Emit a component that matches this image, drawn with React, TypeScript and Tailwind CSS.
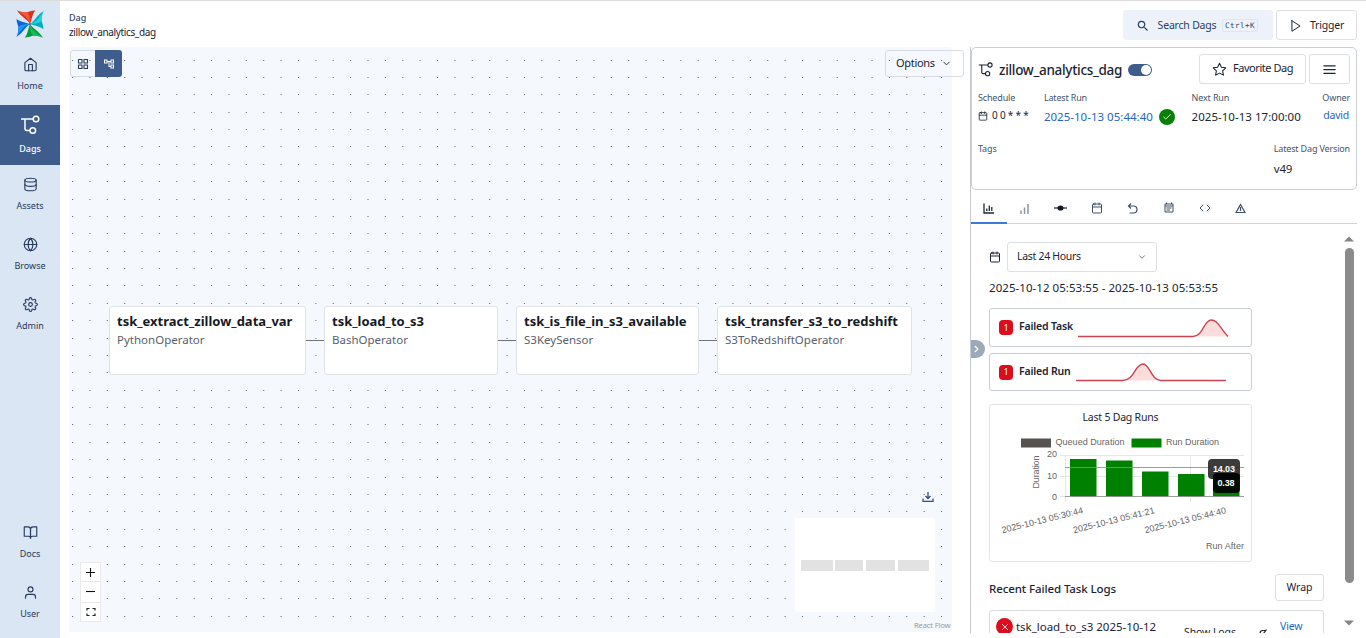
import type { ReactNode } from "react";
import {
  FiBookOpen, FiCalendar, FiCheck, FiChevronDown, FiChevronRight, FiCode, FiDatabase, FiGlobe,
  FiGrid, FiHome, FiMenu, FiPlay, FiSettings, FiStar, FiUser, FiX,
} from "react-icons/fi";
import { MdOutlineAccountTree, MdOutlineEventNote, MdSearch } from "react-icons/md";

const blades = [
  { angle: 0, dark: "#d9331f", light: "#f4593c" },
  { angle: 90, dark: "#00aebd", light: "#22d3dd" },
  { angle: 180, dark: "#009b3f", light: "#1cb95a" },
  { angle: 270, dark: "#0a66d8", light: "#1c97f5" },
];

function Logo() {
  return (
    <svg width="28" height="28" viewBox="-42 -42 84 84">
      {blades.map((b) => (
        <g key={b.angle} transform={`rotate(${b.angle})`}>
          <path d="M0 0C-6 -12 -26 -20 -39 -41C-28 -34 -18 -36 -8 -35C2 -38 10 -41 16 -40C8 -34 6 -16 0 0Z" fill={b.dark} />
          <path d="M0 0C-4 -16 -18 -28 -39 -41C-28 -34 -18 -36 -8 -35C-2 -26 1 -12 0 0Z" fill={b.light} />
        </g>
      ))}
      <circle r="2.500" fill="#2b3547" />
    </svg>
  );
}

function DagIcon({ size, stroke = 1.6 }: { size: number; stroke?: number }) {
  return (
    <svg width={size} height={size} viewBox="0 0 20 20" fill="none" stroke="currentColor" strokeWidth={stroke}>
      <path d="M1 4h12M5 4v9.500q0 2 2 2h3" />
      <circle cx="16" cy="4" r="2.800" />
      <circle cx="12.800" cy="15.500" r="2.800" />
    </svg>
  );
}

function NavItem({ icon, label, active }: { icon: ReactNode; label: string; active?: boolean }) {
  return (
    <div className={active ? "flex h-[60px] w-[60px] flex-col items-center bg-[#3f5d8c] pt-[9px] text-white" : "flex h-[60px] w-[60px] flex-col items-center pt-[8px] text-[#263a5c]"}>
      <div className="flex h-[22px] items-center">{icon}</div>
      <span className={active ? "mt-[6px] text-[9px] leading-[14px] font-medium" : "mt-[4px] text-[9px] leading-[14px]"}>{label}</span>
    </div>
  );
}

function Sidebar() {
  return (
    <nav className="flex h-full w-[60px] shrink-0 flex-col bg-[#dae6f4]">
      <div className="flex h-[44px] items-center justify-center pt-[1px]"><Logo /></div>
      <NavItem icon={<FiHome size={15} strokeWidth={1.8} />} label="Home" />
      <NavItem icon={<DagIcon size={20} stroke={1.5} />} label="Dags" active />
      <NavItem icon={<FiDatabase size={15} strokeWidth={1.8} />} label="Assets" />
      <NavItem icon={<FiGlobe size={15} strokeWidth={1.8} />} label="Browse" />
      <NavItem icon={<FiSettings size={15} strokeWidth={1.8} />} label="Admin" />
      <div className="mt-auto mb-[5px]">
        <NavItem icon={<FiBookOpen size={15} strokeWidth={1.8} />} label="Docs" />
        <NavItem icon={<FiUser size={15} strokeWidth={1.8} />} label="User" />
      </div>
    </nav>
  );
}

function Header() {
  return (
    <header className="flex h-[46px] shrink-0 items-start justify-between pr-[9px] pl-[9px]">
      <div className="flex flex-col pt-[10px]">
        <span className="text-[9px] leading-[14px] font-medium text-[#2f4569]">Dag</span>
        <span className="text-[10px] leading-[15px] tracking-[-0.35px]">zillow_analytics_dag</span>
      </div>
      <div className="flex gap-[3px] pt-[9px]">
        <button className="flex h-[30px] w-[150px] items-center rounded-[3px] bg-[#edf2fa] pt-[1px] pl-[13px] text-[#2b3f62]">
          <MdSearch size={14} />
          <span className="ml-[7px] w-[60px] text-[10.5px] tracking-[-0.2px] whitespace-nowrap">Search Dags</span>
          <span className="ml-[5px] flex h-[13px] w-[36px] items-center justify-center rounded-[2px] border border-[#dfe6f0] font-['DejaVu_Sans_Mono',monospace] text-[7.500px] tracking-[0.5px]">Ctrl+K</span>
        </button>
        <button className="flex h-[30px] w-[81px] items-center rounded-[3px] border border-[#dcdfe4] pt-[1px] pl-[12px]">
          <FiPlay size={14} strokeWidth={1.7} />
          <span className="ml-[7px] text-[10.5px] tracking-[-0.2px]">Trigger</span>
        </button>
      </div>
    </header>
  );
}

const nodes = [
  { id: "tsk_extract_zillow_data_var", op: "PythonOperator", box: "left-[40px] w-[197px]" },
  { id: "tsk_load_to_s3", op: "BashOperator", box: "left-[255px] w-[174px]" },
  { id: "tsk_is_file_in_s3_available", op: "S3KeySensor", box: "left-[447px] w-[183px]" },
  { id: "tsk_transfer_s3_to_redshift", op: "S3ToRedshiftOperator", box: "left-[648px] w-[195px]" },
];

const DOT_GAP = 17.38;
const dotRows = Array.from({ length: 33 }, (_, i) => Math.floor(13 + i * DOT_GAP) + 0.5);

function Graph() {
  return (
    <section className="relative h-[585px] w-[883px] rounded-[3px] bg-[#f5f8fc]">
      <svg className="absolute inset-0" width="883" height="575">
        {dotRows.map((y) => (
          <path key={y} d={`M3 ${y}H880`} stroke="#6a717c" strokeWidth="1" strokeDasharray="1.1 16.28" />
        ))}
        <path d="M237 293.500h18M429 293.500h18M630 293.500h18" stroke="#6b7280" />
      </svg>
      {nodes.map((n) => (
        <div key={n.id} className={`absolute top-[259px] h-[69px] rounded-[3px] border border-[#dfe2e6] bg-white pt-[6px] pl-[7px] whitespace-nowrap ${n.box}`}>
          <div className="text-[13px] leading-[17px] font-bold text-[#16191f]">{n.id}</div>
          <div className="mt-[1px] text-[11.5px] leading-[17px] text-[#57616d]">{n.op}</div>
        </div>
      ))}
      <div className="absolute top-[3px] left-[1px] flex h-[27px] w-[52px] overflow-hidden rounded-[3px]">
        <span className="flex w-[25px] items-center justify-center rounded-l-[3px] border border-r-0 border-[#d5dce6] text-[#263a5c]"><FiGrid size={12} strokeWidth={2.2} /></span>
        <span className="flex w-[27px] items-center justify-center bg-[#3f5d8c] text-white"><MdOutlineAccountTree size={12} /></span>
      </div>
      <button className="absolute top-[3px] left-[816px] flex h-[27px] w-[79px] items-center rounded-[3px] border border-[#d9dde3] pl-[10px] text-[11px]">
        <span className="w-[38px] tracking-[-0.3px]">Options</span>
        <FiChevronDown className="ml-[7px]" size={11} />
      </button>
      <div className="absolute top-[515px] left-[11px] flex h-[60px] w-[21px] flex-col divide-y divide-[#e8eaed] border border-[#e8eaed] bg-white">
        <span className="flex flex-1 items-center justify-center"><svg width="9" height="9"><path d="M4.500 0v9M0 4.500h9" stroke="#111" strokeWidth="1.1" /></svg></span>
        <span className="flex flex-1 items-center justify-center pb-[1px]"><svg width="9" height="9"><path d="M0 4.500h9" stroke="#111" strokeWidth="1.1" /></svg></span>
        <span className="flex flex-1 items-center justify-center"><svg width="10" height="10" fill="none" stroke="#222" strokeWidth="1.2"><path d="M1 3.500V1.500H3.500M6.500 1.500H9V3.500M9 6.500V8.500H6.500M3.500 8.500H1V6.500" /></svg></span>
      </div>
      <svg className="absolute top-[444px] left-[853px]" width="12" height="12" fill="none" stroke="#334e86" strokeWidth="1.3">
        <path d="M6 1v6.500M3.500 5L6 7.500L8.500 5M1 7.500V10.300H11V7.500" />
      </svg>
      <svg className="absolute top-[471px] left-[726px] bg-white" width="140" height="94" fill="#e2e2e2">
        <path d="M6 42h32v11H6zM40 42h28v11H40zM71 42h29v11H71zM103 42h31v11H103z" />
      </svg>
      <span className="absolute top-[572px] left-[845px] text-[7.500px] leading-[12px] tracking-[-0.1px] whitespace-nowrap text-[#999]">React Flow</span>
    </section>
  );
}

function Label({ children }: { children: ReactNode }) {
  return <div className="text-[9px] leading-[14px] tracking-[-0.16px] whitespace-nowrap text-[#44546c]">{children}</div>;
}

function DagCard() {
  return (
    <div className="h-[143px] shrink-0 rounded-[5px] border border-[#cbcfd4] pt-[6px] pr-[6px] pl-[6px]">
      <div className="flex h-[30px] items-center">
        <DagIcon size={15} stroke={1.5} />
        <h1 className="ml-[6px] w-[122px] pt-[1px] text-[13.5px] leading-[20px] font-medium tracking-[-0.3px] whitespace-nowrap">zillow_analytics_dag</h1>
        <span className="mt-[2px] ml-[7px] flex h-[12px] w-[24px] items-center justify-end rounded-full bg-[#3f5d8c] p-[1px]"><span className="h-[10px] w-[10px] rounded-full bg-white" /></span>
        <button className="ml-auto flex h-[30px] w-[107px] items-center rounded-[3px] border border-[#dcdfe4] pl-[12px] text-[11px]">
          <FiStar size={15} strokeWidth={1.7} /><span className="ml-[6px] -mt-[1px] tracking-[-0.45px] whitespace-nowrap">Favorite Dag</span>
        </button>
        <button className="ml-[3px] flex h-[30px] w-[41px] items-center justify-center rounded-[3px] border border-[#dcdfe4]"><FiMenu size={15} /></button>
      </div>
      <div className="mt-[7px] flex">
        <div className="w-[66px]">
          <Label>Schedule</Label>
          <div className="mt-[3px] flex items-center gap-[4px] leading-[15px]"><FiCalendar size={10} /><span className="text-[10px] tracking-[-0.2px] whitespace-nowrap">0 0 * * *</span></div>
        </div>
        <div className="w-[148px]">
          <Label>Latest Run</Label>
          <div className="mt-[3px] flex items-center text-[11.5px] leading-[18px] text-[#2565c7]">
            <span className="w-[109px] tracking-[0.02px] whitespace-nowrap">2025-10-13 05:44:40</span>
            <span className="ml-[6px] flex h-[16px] w-[16px] items-center justify-center rounded-full bg-[#078007] text-white"><FiCheck size={10} /></span>
          </div>
        </div>
        <div className="w-[131px]">
          <Label>Next Run</Label>
          <div className="mt-[3px] text-[11.5px] leading-[18px] tracking-[0.03px] whitespace-nowrap">2025-10-13 17:00:00</div>
        </div>
        <div>
          <Label>Owner</Label>
          <div className="mt-[2px] pl-[1px] text-[10.5px] leading-[16px] tracking-[-0.25px] text-[#2565c7]">david</div>
        </div>
      </div>
      <div className="mt-[16px] flex">
        <div className="w-[296px]"><Label>Tags</Label></div>
        <div><Label>Latest Dag Version</Label><div className="mt-[5px] text-[11.5px] leading-[16px] tracking-[-0.2px]">v49</div></div>
      </div>
    </div>
  );
}

const tabs: ReactNode[] = [
  <svg key="a" width="11" height="11" fill="none" stroke="currentColor" strokeWidth="1.3"><path d="M1 0.500V10H11M3.800 5.500V8M6.300 2.500V8M8.800 4V8" /></svg>,
  <svg key="b" width="11" height="11" fill="none" stroke="#8b95a1" strokeWidth="1.500"><path d="M2 7.500V11M5.500 4.500V11M9 1V11" /></svg>,
  <svg key="c" width="13" height="8"><path d="M0 4H13" stroke="#20242b" strokeWidth="1.200" /><ellipse cx="6.500" cy="4" rx="3" ry="2.600" fill="#111827" /></svg>,
  <FiCalendar key="d" size={12} />,
  <svg key="e" width="11" height="11" fill="none" stroke="currentColor" strokeWidth="1.200"><path d="M4 0.500L1.500 3L4 5.500M1.500 3H6.500A3.500 3.500 0 0 1 6.500 10H2.500" /></svg>,
  <MdOutlineEventNote key="f" size={12} />,
  <FiCode key="g" size={12} />,
  <svg key="h" width="11" height="11" fill="none" stroke="currentColor" strokeWidth="1.200"><path d="M5.500 1.500L10 9.500H1ZM5.500 4V8" /></svg>,
];

function Tabs() {
  return (
    <div className="flex h-[34px] shrink-0 border-b border-[#d0d4d9] text-[#3f4f66]">
      {tabs.map((t, i) => (
        <span key={i} className={i === 0 ? "-mb-[1px] flex w-[36px] items-center justify-center border-b-2 border-[#3b7bd8] pt-[5px] pr-[1px] text-[#1c2737]" : "flex w-[36px] items-center justify-center pt-[3px] pr-[1px]"}>{t}</span>
      ))}
    </div>
  );
}

function Trend({ label, fill, line, box }: { label: string; fill: string; line: string; box: string }) {
  return (
    <div className={`flex w-[263px] items-center rounded-[3px] border border-[#c9ced6] pl-[9px] ${box}`}>
      <span className="flex h-[15px] w-[14px] items-center justify-center rounded-[4px] bg-[#dc0d1c] text-[9px] text-white">1</span>
      <span className={label === "Failed Run" ? "ml-[6px] w-[57px] text-[10.5px] font-semibold tracking-[-0.17px] whitespace-nowrap" : "-mt-[2px] ml-[6px] w-[59px] text-[10.5px] font-semibold tracking-[-0.17px] whitespace-nowrap"}>{label}</span>
      <svg width="151" height="24" viewBox="0 -0.500 151 24" fill="none">
        <path d={fill} fill="#fddcdc" />
        <path d={line} stroke="#c94450" strokeWidth="1.400" />
      </svg>
    </div>
  );
}

function RunsChart() {
  const bars = [
    { x: 80, y: 55 }, { x: 116, y: 56.5 }, { x: 152, y: 67.5 }, { x: 188, y: 70 }, { x: 223, y: 71 },
  ];
  const dates = [
    { x: 93.500, y: 109, t: "2025-10-13 05:30:44" }, { x: 165, y: 109, t: "2025-10-13 05:41:21" }, { x: 236.500, y: 109, t: "2025-10-13 05:44:40" },
  ];
  return (
    <div className="mt-[13px] h-[158px] w-[263px] shrink-0 rounded-[3px] border border-[#e2e4e8]">
      <svg width="261" height="156" viewBox="0 1 261 156" fontFamily="'Liberation Sans', Arial, sans-serif" fontSize="9" fill="#666">
        <text x="92.500" y="16.500" fontFamily="'Noto Sans', sans-serif" fontSize="10.5" fill="#1b2433" textLength="76">Last 5 Dag Runs</text>
        <rect x="31" y="34.5" width="30" height="9" fill="#555250" />
        <text x="65.500" y="41" textLength="69">Queued Duration</text>
        <rect x="141.500" y="34.5" width="30" height="9" fill="#008000" />
        <text x="176" y="41" textLength="53">Run Duration</text>
        <path d="M70 51.500H254M70 72.500H254M200.500 51V98M75.500 51V98M70 92.500H76" stroke="#e6e6e6" />
        <text x="67" y="53" textAnchor="end">20</text>
        <text x="67" y="75" textAnchor="end">10</text>
        <text x="67" y="95.500" textAnchor="end">0</text>
        <text transform="translate(49 84.500) rotate(-90)" textLength="33">Duration</text>
        {bars.map((b) => <rect key={b.x} x={b.x} y={b.y} width="26.5" height={92.5 - b.y} fill="#008000" />)}
        <path d="M75 63.500H254M75 92.500H254" stroke="#8a8d8a" strokeOpacity="0.850" />
        {dates.map((d) => <text key={d.t} transform={`translate(${d.x} ${d.y}) rotate(-14)`} textAnchor="end" textLength="83.5">{d.t}</text>)}
        <rect x="218" y="55" width="32" height="20" rx="4" fill="#2a2a2a" fillOpacity="0.92" />
        <rect x="223" y="69" width="27" height="20" rx="4" fill="#000" fillOpacity="0.9" />
        <text x="223" y="67.500" fill="#fff" fontWeight="bold" textLength="22">14.03</text>
        <text x="227.500" y="81.500" fill="#fff" fontWeight="bold" textLength="17">0.38</text>
        <text x="216" y="145" textLength="38">Run After</text>
      </svg>
    </div>
  );
}

function Overview() {
  return (
    <div className="flex min-h-0 flex-1">
      <div className="flex min-w-0 flex-1 flex-col overflow-hidden pt-[18px] pl-[18px]">
        <div className="flex h-[30px] shrink-0 items-center">
          <FiCalendar size={12} />
          <div className="ml-[6px] flex h-[30px] w-[150px] items-center justify-between rounded-[3px] border border-[#dcdfe4] pr-[9px] pb-[1px] pl-[9px] text-[10.5px] tracking-[-0.3px]">Last 24 Hours<FiChevronDown size={10} color="#59616b" /></div>
        </div>
        <div className="mt-[7px] h-[17px] shrink-0 text-[11.5px] leading-[17px] tracking-[0.05px] whitespace-nowrap">2025-10-12 05:53:55 - 2025-10-13 05:53:55</div>
        <Trend label="Failed Task" box="mt-[12px] h-[39px] shrink-0"
          fill="M117 20C125 19 127 3.500 133 3.500C140 3.500 142 13 150 20Z"
          line="M0 20H115C125 20 126 3.500 133 3.500C140 3.500 142 12 150 20" />
        <Trend label="Failed Run" box="mt-[6px] h-[38px] shrink-0"
          fill="M49 20C58 19 59 3.500 67 3.500C74 3.500 76 19 84 20Z"
          line="M0 20H47C58 20 59 3.500 67 3.500C74 3.500 75 20 85 20H150" />
        <RunsChart />
        <div className="mt-[12px] flex h-[27px] w-[335px] shrink-0 items-center justify-between">
          <h2 className="pt-[2px] text-[11.5px] font-medium tracking-[-0.1px]">Recent Failed Task Logs</h2>
          <button className="h-[27px] w-[49px] rounded-[3px] border border-[#dcdfe4] text-[10.5px]">Wrap</button>
        </div>
        <div className="mt-[9px] flex h-[52px] w-[335px] shrink-0 items-start rounded-[3px] border border-[#d8dbe0] pt-[7px] pl-[6px] text-[11.5px]">
          <span className="flex h-[17px] w-[17px] shrink-0 items-center justify-center rounded-full bg-[#dc0d1c] text-white"><FiX size={10} /></span>
          <span className="ml-[3px] w-[168px] leading-[18px] tracking-[-0.03px] whitespace-nowrap">tsk_load_to_s3 2025-10-12</span>
          <span className="mt-[6px] w-[75px] text-[10.5px] leading-[16px] tracking-[-0.1px] whitespace-nowrap">Show Logs</span>
          <svg className="mt-[10px]" width="9" height="9" fill="none" stroke="#222" strokeWidth="1.200"><path d="M1 5.500Q1 2.500 4 2.500H6.500M4.500 5.500L7.500 1.500" /></svg>
          <span className="ml-[12px] text-[10.5px] leading-[16px] tracking-[-0.15px] text-[#2565c7]">View</span>
        </div>
      </div>
      <div className="flex w-[16px] shrink-0 flex-col items-center pt-[12px]">
        <svg width="10" height="6" fill="#858585"><path d="M0 5.500L5 0.500L10 5.500Z" /></svg>
        <div className="mt-[6px] h-[335px] w-[9px] rounded-full bg-[#8b8b8b]" />
        <svg className="mt-[37px]" width="10" height="6" fill="#858585"><path d="M0 0.500L5 5.500L10 0.500Z" /></svg>
      </div>
    </div>
  );
}

export default function App() {
  return (
    <div className="flex h-[638px] w-[1366px] flex-col overflow-hidden bg-white font-['Noto_Sans','Open_Sans',sans-serif] text-[#1b2433]">
      <div className="h-px shrink-0 bg-[#dcdcdc]" />
      <div className="flex min-h-0 flex-1">
        <Sidebar />
        <div className="flex min-w-0 flex-1 flex-col">
          <Header />
          <main className="flex h-[586px] pl-[9px]">
            <div className="w-[901px] shrink-0"><Graph /></div>
            <aside className="relative flex w-[387px] shrink-0 flex-col border-l border-[#c6cad0]">
              <DagCard />
              <Tabs />
              <Overview />
              <span className="absolute top-[293px] left-0 flex h-[18px] w-[14px] items-center justify-center rounded-r-full bg-[#9ca9b9] pr-[3px] text-white"><FiChevronRight size={12} strokeWidth={2.500} /></span>
            </aside>
          </main>
        </div>
      </div>
    </div>
  );
}
